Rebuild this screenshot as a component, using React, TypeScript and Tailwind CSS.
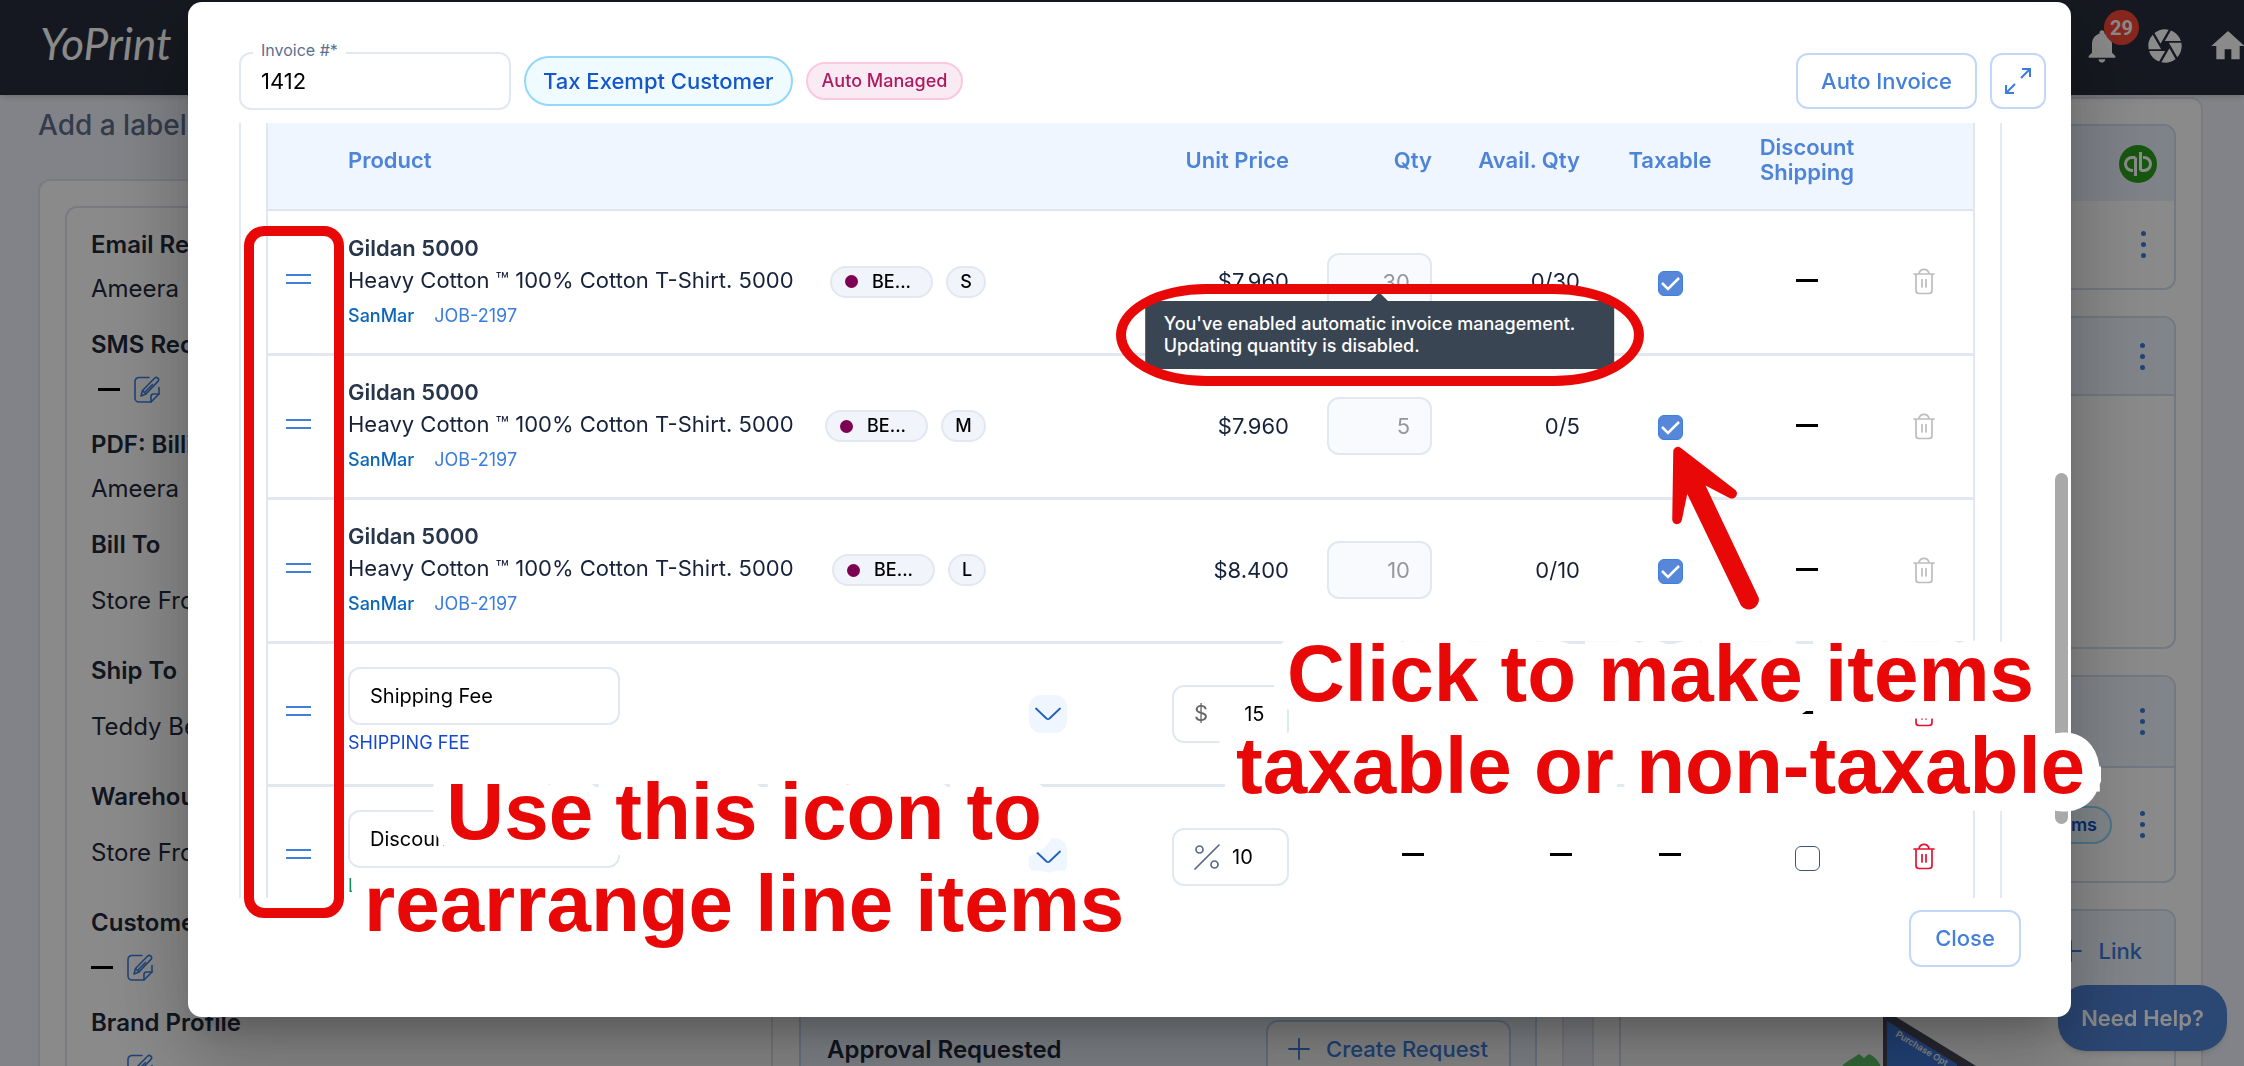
import type { ReactNode } from "react";
import { MdCamera, MdHome, MdNotifications } from "react-icons/md";

function EditIcon() {
  return (
    <svg className="h-[27px] w-[26px] text-[#3b7ddd]" viewBox="0 0 26 27" fill="none" stroke="currentColor" strokeWidth="1.6" strokeLinecap="round" strokeLinejoin="round">
      <path d="M15 1.5H5A4 4 0 0 0 1 5.500V22a4 4 0 0 0 4 4h12l8-8v-6.500" />
      <path d="M17 26v-5.500a2.500 2.500 0 0 1 2.500-2.500H25" />
      <path d="M7 20l1.500-5.500L20.500 2.200a2.300 2.300 0 0 1 3.400 3.200L12 18z" />
      <path d="M8.600 14.600L12 18M11.500 15.500l7-7" />
    </svg>
  );
}

function TrashIcon() {
  return (
    <svg className="h-[27px] w-[22px]" viewBox="0 0 22 27" fill="none" stroke="currentColor" strokeWidth="1.700" strokeLinecap="round" strokeLinejoin="round">
      <path d="M1 6h20M3 6v16.500a3 3 0 0 0 3 3h10a3 3 0 0 0 3-3V6M6 5.500C6.500 3 8.500 1.300 11 1.300S15.500 3 16 5.500M9 11.500v7.500M13 11.500v7.500" />
    </svg>
  );
}

function PercentIcon() {
  return (
    <svg className="h-[26px] w-[26px] shrink-0 text-[#56688a]" viewBox="0 0 26 26" fill="none" stroke="currentColor" strokeWidth="1.700" strokeLinecap="round">
      <path d="M25 1L1 25" />
      <circle cx="5.500" cy="5.500" r="3.500" />
      <circle cx="20.500" cy="20.500" r="3.500" />
    </svg>
  );
}

function PlusIcon() {
  return (
    <svg className="h-[22px] w-[22px]" viewBox="0 0 22 22" stroke="currentColor" strokeWidth="1.800" strokeLinecap="round">
      <path d="M11 1v20M1 11h20" />
    </svg>
  );
}

function Dots() {
  return (
    <button aria-label="More" className="flex flex-col gap-1.5 p-1">
      <span className="size-[5px] rounded-full bg-[#3b7ddd]" />
      <span className="size-[5px] rounded-full bg-[#3b7ddd]" />
      <span className="size-[5px] rounded-full bg-[#3b7ddd]" />
    </button>
  );
}

function Dash() {
  return <span className="inline-block h-[3px] w-[22px] bg-black" />;
}

function Field({ label, children, tall }: { label: string; children: ReactNode; tall?: boolean }) {
  return (
    <div className={tall ? "mb-3.5" : "mb-3"}>
      <h3 className="h-11 text-2xl leading-[44px] font-semibold text-[#1e293b]">{label}</h3>
      <div className={tall ? "flex h-[68px] items-center text-2xl text-[#1e293b]" : "flex h-11 items-center text-2xl text-[#1e293b]"}>{children}</div>
    </div>
  );
}

function Background() {
  return (
    <div className="flex h-screen flex-col overflow-hidden bg-[#f1f3fb]">
      <header className="z-10 flex h-[95px] shrink-0 items-start justify-between bg-[#282e3c] shadow-md">
        <span className="pt-2 pl-10 font-['Lato'] text-[44px] leading-[70px] text-white italic">YoPrint</span>
        <nav className="-mr-1 flex gap-[23px] pt-[26px] text-white">
          <button aria-label="Notifications" className="relative">
            <MdNotifications size={40} />
            <span className="absolute -top-4 left-[22px] flex size-[35px] items-center justify-center rounded-full bg-[#fb4836] font-['Roboto'] text-xl font-bold">29</span>
          </button>
          <button aria-label="Gallery"><MdCamera size={40} /></button>
          <button aria-label="Home"><MdHome size={40} /></button>
        </nav>
      </header>
      <div className="flex min-h-0 flex-1 gap-7 pr-[41px] pl-[38px]">
        <main className="flex min-w-0 flex-[1526_1_0%] flex-col">
          <h2 className="mt-3 h-[72px] shrink-0 text-[28px] leading-9 font-medium text-[#5d6f8c]">Add a label</h2>
          <div className="flex h-[1000px] gap-[26px] rounded-xl border-2 border-[#dfe3ee] bg-white p-[25px]">
            <section className="min-w-0 flex-[680_1_0%] rounded-xl border-2 border-[#dfe3ee] pt-[15px] pl-6">
              <Field label="Email Recipients">Ameera</Field>
              <Field label="SMS Recipients">
                <span className="mr-3.5 ml-[7px] flex"><Dash /></span>
                <EditIcon />
              </Field>
              <Field label="PDF: Billing">Ameera</Field>
              <Field label="Bill To" tall>Store Front</Field>
              <Field label="Ship To" tall>Teddy Bear</Field>
              <Field label="Warehouse" tall>Store Front</Field>
              <Field label="Customer">
                <span className="mr-3.5 flex"><Dash /></span>
                <EditIcon />
              </Field>
              <Field label="Brand Profile">
                <span className="mr-3.5 flex"><Dash /></span>
                <EditIcon />
              </Field>
            </section>
            <div className="flex min-w-0 flex-[738_1_0%] flex-col gap-[26px]">
              <section className="h-[778px] shrink-0 rounded-xl border-2 border-[#dfe3ee]" />
              <section className="flex h-[160px] shrink-0 items-start justify-between border-2 border-[#c6d9f5] bg-[#eff6ff] pt-2 pr-6 pl-[26px]">
                <h2 className="text-2xl leading-[60px] font-semibold text-[#1e293b]">Approval Requested</h2>
                <button className="flex h-[58px] w-[245px] items-center gap-4 rounded-xl border-2 border-[#bcd3f8] bg-white pl-[20px] text-[22px] font-medium text-[#3b7ddd]">
                  <PlusIcon />
                  Create Request
                </button>
              </section>
            </div>
          </div>
        </main>
        <aside className="mt-0.5 flex h-[1100px] min-w-0 flex-[557_1_0%] flex-col gap-[26px] rounded-xl border-2 border-[#dfe3ee] bg-white p-[25px]">
          <section className="h-[166px] shrink-0 overflow-hidden rounded-xl border-2 border-[#d3dfee]">
            <div className="flex h-[75px] items-center justify-end bg-[#eaf2fe] pr-[17px]">
              <svg className="size-[38px]" viewBox="0 0 38 38" fill="none">
                <circle cx="19" cy="19" r="19" fill="#2ca01c" />
                <path d="M16.500 12.500h-3.500a6.500 6.500 0 0 0 0 13h1M16.500 12.500v18.500M21.500 25.500h3.500a6.500 6.500 0 0 0 0-13h-1M21.500 25.500V7" stroke="#fff" strokeWidth="3" />
              </svg>
            </div>
            <div className="flex h-[87px] items-center justify-end pr-6"><Dots /></div>
          </section>
          <section className="h-[333px] shrink-0 overflow-hidden rounded-xl border-2 border-[#d3dfee]">
            <div className="flex h-[78px] items-center justify-end border-b-2 border-[#d3dfee] bg-[#eff6ff] pr-[25px]"><Dots /></div>
          </section>
          <section className="h-[208px] shrink-0 overflow-hidden rounded-xl border-2 border-[#d3dfee]">
            <div className="flex h-[91px] items-center justify-end border-b-2 border-[#d3dfee] bg-[#eff6ff] pr-[25px]"><Dots /></div>
            <div className="flex h-[113px] items-center justify-end gap-[24px] pr-[25px]">
              <span className="flex h-[38px] items-center rounded-full border-2 border-[#8bd8ff] bg-[#effbff] px-[13px] text-lg font-semibold text-[#0f4fc8]">Terms</span>
              <Dots />
            </div>
          </section>
          <section className="h-[300px] shrink-0 overflow-hidden rounded-xl border-2 border-[#d3dfee]">
            <div className="flex h-20 items-center justify-end gap-[16px] bg-[#eff6ff] pr-[32px] text-[22px] font-medium text-[#3b7ddd]">
              <PlusIcon />
              <a href="#link">Link</a>
            </div>
            <div className="flex items-start pt-1 pl-[220px]">
              <svg className="h-[90px] w-[140px]" viewBox="0 0 140 90" fill="none">
                <path d="M0 72c6-6 9-7 12-9l6-4 5 4 5-4c6 3 9 6 12 13v19H0z" fill="#5ec268" />
                <path d="M42 14l98 60v16H42z" fill="#48485c" />
                <path d="M46 26l70 43v21H46z" fill="#3f7be0" />
                <text x="54" y="41" transform="rotate(31 54 41)" fill="#fff" fontFamily="Inter" fontWeight="600" fontSize="9">Purchase Opt</text>
              </svg>
            </div>
          </section>
        </aside>
      </div>
      <button className="fixed right-[17px] bottom-[15px] h-[66px] rounded-[28px] bg-[#5083d7] px-[23px] text-[22px] font-semibold text-white shadow-md">Need Help?</button>
    </div>
  );
}

function Handle() {
  return (
    <button aria-label="Drag to reorder" className="mt-[-5px] ml-[18px] flex flex-col gap-1.5">
      <span className="h-0.5 w-[25px] bg-[#3f7fdc]" />
      <span className="h-0.5 w-[25px] bg-[#3f7fdc]" />
    </button>
  );
}

function Check({ label }: { label: string }) {
  return (
    <label className="relative inline-flex size-[25px] align-middle">
      <input type="checkbox" defaultChecked aria-label={label} className="peer size-[25px] appearance-none rounded-md border border-[#3f7fdc] bg-[#5787d9]" />
      <svg className="absolute inset-0 size-[25px]" viewBox="0 0 25 25" fill="none" stroke="#fff" strokeWidth="2.500">
        <path d="M4 12l6 6L21 7" />
      </svg>
    </label>
  );
}

type Product = { size: string; chip: string; price: string; qty: string; avail: string; tip?: boolean };

const products: Product[] = [
  { size: "S", chip: "w-10", price: "$7.960", qty: "30", avail: "0/30", tip: true },
  { size: "M", chip: "w-[45px]", price: "$7.960", qty: "5", avail: "0/5" },
  { size: "L", chip: "w-[38px]", price: "$8.400", qty: "10", avail: "0/10" },
];

function ProductRow({ size, chip, price, qty, avail, tip }: Product) {
  return (
    <tr className="h-36 border-b-[3px] border-[#e1e8f0]">
      <td><Handle /></td>
      <td className="pr-[148px]">
        <div className="flex items-center justify-between">
          <div className="text-[22px] leading-8 whitespace-nowrap">
            <p className="font-semibold text-[#27364b]">Gildan 5000</p>
            <p className="text-[#16213a]">Heavy Cotton ™ 100% Cotton T-Shirt. 5000</p>
            <p className="mt-1 flex gap-5 text-lg leading-8">
              <a href="#sanmar" className="font-medium text-[#0b66b8]">SanMar</a>
              <a href="#job" className="text-[#3b7ddd]">JOB-2197</a>
            </p>
          </div>
          <div className="flex gap-[13px] text-lg font-medium text-black">
            <span className="flex h-8 w-[103px] items-center gap-3.5 rounded-full border-2 border-[#e2e8f0] bg-[#f1f4fa] pl-[13px]">
              <span className="size-[13px] rounded-full bg-[#7d0052]" />
              BE...
            </span>
            <span className={`flex h-8 items-center justify-center rounded-full border-2 border-[#e2e8f0] bg-[#f1f4fa] ${chip}`}>{size}</span>
          </div>
        </div>
      </td>
      <td className="pr-5 text-right">{price}</td>
      <td className="pr-5">
        <div className="relative ml-auto w-[105px]">
          <input aria-label="Quantity" disabled defaultValue={qty} className="block h-[58px] w-full rounded-xl border-2 border-[#e2e8f0] bg-[#f8fafe] pr-5 text-right text-[#94979c]" />
          {tip && (
            <div role="tooltip" className="absolute top-[48px] left-1/2 z-10 -translate-x-1/2 rounded bg-[#3a4553] py-3 pr-[39px] pl-[19px] text-lg leading-[22px] font-medium whitespace-nowrap text-white">
              <span className="absolute -top-[6px] left-1/2 size-[13px] -translate-x-1/2 rotate-45 bg-[#3a4553]" />
              You've enabled automatic invoice management.
              <br />
              Updating quantity is disabled.
            </div>
          )}
        </div>
      </td>
      <td className="pr-5 text-right">{avail}</td>
      <td className="text-center"><Check label="Taxable" /></td>
      <td className="text-center"><div className="flex justify-center pb-0.5"><Dash /></div></td>
      <td><button disabled aria-label="Delete" className="mx-auto block text-[#bdbdbd]"><TrashIcon /></button></td>
    </tr>
  );
}

function FeeRow({ name, tag, tagClass, prefix, value, discount }: { name: string; tag: string; tagClass: string; prefix: ReactNode; value: string; discount?: boolean }) {
  return (
    <tr className="h-[143px] border-b-[3px] border-[#e1e8f0]">
      <td><Handle /></td>
      <td className="pr-[67px]">
        <div className="flex items-center justify-between">
          <div className="pb-px">
            <input aria-label="Item name" defaultValue={name} className="block h-[58px] w-[272px] rounded-xl border-2 border-[#e2e8f0] bg-white px-5 text-xl text-black" />
            <a href="#item" className={`block pt-0.5 text-lg leading-8 ${tagClass}`}>{tag}</a>
          </div>
          <button aria-label="Expand" className="flex h-[38px] w-[38px] items-center justify-center rounded-xl bg-[#eff6ff]">
            <svg className="w-[26px]" viewBox="0 0 26 14" fill="none" stroke="#1f5fb8" strokeWidth="1.800" strokeLinecap="round" strokeLinejoin="round">
              <path d="M1 1.500l10.500 10a2 2 0 0 0 3 0L25 1.500" />
            </svg>
          </button>
        </div>
      </td>
      <td className="pr-5">
        <label className="ml-auto flex h-[58px] w-[117px] items-center rounded-xl border-2 border-[#e2e8f0] bg-white pl-5">
          {prefix}
          <input aria-label={name} defaultValue={value} className="w-8 min-w-0 text-xl text-black" />
        </label>
      </td>
      <td className="pr-7">{discount && <div className="flex justify-end pb-1"><Dash /></div>}</td>
      <td className="pr-7">{discount && <div className="flex justify-end pb-1"><Dash /></div>}</td>
      <td>{discount && <div className="flex justify-center pb-1"><Dash /></div>}</td>
      <td className="text-center">
        {discount ? (
          <input type="checkbox" aria-label="Discount shipping" className="inline-block size-[25px] appearance-none rounded-md border border-[#3c5680] bg-white align-middle" />
        ) : (
          <div className="flex justify-center pb-0.5"><Dash /></div>
        )}
      </td>
      <td><button aria-label="Delete" className="mx-auto block text-[#e8112d]"><TrashIcon /></button></td>
    </tr>
  );
}

function Dialog() {
  return (
    <div role="dialog" aria-modal="true" className="relative mt-0.5 mr-[173px] mb-[49px] ml-[188px] flex min-w-0 flex-1 flex-col rounded-[14px] bg-white shadow-[0_22px_30px_-14px_rgba(0,0,0,0.2),0_48px_76px_6px_rgba(0,0,0,0.14),0_18px_92px_16px_rgba(0,0,0,0.12)]">
      <div className="flex h-[121px] shrink-0 items-center gap-[13px] pt-[37px] pr-[25px] pl-[51px]">
        <div className="relative">
          <label htmlFor="invoice" className="absolute -top-3 left-3.5 bg-white px-2 text-base leading-5 whitespace-nowrap text-[#5b6f90]">Invoice #*</label>
          <input id="invoice" defaultValue="1412" className="block h-[58px] w-[272px] rounded-xl border-2 border-[#e2e8f0] px-5 text-[22px] text-black" />
        </div>
        <span className="flex h-[50px] items-center rounded-full border-2 border-[#93d7fb] bg-[#effbff] px-[17px] text-[22px] font-medium text-[#1557c9]">Tax Exempt Customer</span>
        <span className="flex h-[38px] items-center rounded-full border-2 border-[#fbc8dd] bg-[#faeaf3] px-[14px] text-lg font-medium text-[#ad1a61]">Auto Managed</span>
        <button className="ml-auto h-14 w-[181px] rounded-xl border-2 border-[#c3d7f8] text-[22px] font-medium text-[#4480da]">Auto Invoice</button>
        <button aria-label="Expand dialog" className="flex size-14 items-center justify-center rounded-xl border-2 border-[#c3d7f8] text-[#3b7ddd]">
          <svg className="size-[26px]" viewBox="0 0 26 26" fill="none" stroke="currentColor" strokeWidth="2">
            <path d="M17 1h8v8M25 1l-9 9M9 25H1v-8M1 25l9-9" />
          </svg>
        </button>
      </div>
      <div className="mr-[69px] ml-[51px] h-[775px] shrink-0 overflow-hidden border-x-2 border-[#e4eaf2] px-[25px]">
        <div className="border-x-2 border-[#dfe7f1]">
          <table className="w-full table-fixed border-collapse text-[22px] text-[#16213a]">
            <colgroup>
              <col className="w-[80px]" />
              <col />
              <col className="w-[175px]" />
              <col className="w-[143px]" />
              <col className="w-[148px]" />
              <col className="w-[140px]" />
              <col className="w-[134px]" />
              <col className="w-[99px]" />
            </colgroup>
            <thead>
              <tr className="h-[87px] border-b-2 border-[#dce5f1] bg-[#f0f6ff] leading-[25px] text-[#4d84d8]">
                <th />
                <th className="pb-3 text-left font-semibold">Product</th>
                <th className="pr-5 pb-3 text-right font-semibold">Unit Price</th>
                <th className="pr-5 pb-3 text-right font-semibold">Qty</th>
                <th className="pr-5 pb-3 text-right font-semibold">Avail. Qty</th>
                <th className="pb-3 font-semibold">Taxable</th>
                <th className="pb-3 font-semibold">Discount Shipping</th>
                <th />
              </tr>
            </thead>
            <tbody>
              {products.map((p) => <ProductRow key={p.size} {...p} />)}
              <FeeRow name="Shipping Fee" tag="SHIPPING FEE" tagClass="text-[#1448cf]" prefix={<span className="mr-[36px] text-[22px] text-[#666]">$</span>} value="15" />
              <FeeRow name="Discount" tag="DISCOUNT" tagClass="text-[#0d9055]" prefix={<span className="mr-3 flex"><PercentIcon /></span>} value="10" discount />
            </tbody>
          </table>
        </div>
      </div>
      <div className="flex justify-end pt-3 pr-[50px]">
        <button className="h-[57px] w-28 rounded-xl border-2 border-[#c3d7f8] text-[22px] font-medium text-[#4480da]">Close</button>
      </div>
      <div className="absolute top-[471px] right-[3px] h-[351px] w-[13px] rounded-full bg-[#a9a9a9]" />
    </div>
  );
}

const note = "absolute text-center font-['Liberation_Sans'] text-[80px] leading-[92px] font-bold whitespace-nowrap text-[#e90808] [-webkit-text-stroke:35px_white] [paint-order:stroke_fill]";

function Annotations() {
  return (
    <div className="pointer-events-none absolute inset-0 overflow-hidden">
      <div className="absolute top-[226px] left-[244px] h-[692px] w-[100px] rounded-[20px] border-[10px] border-[#e90808]" />
      <div className="absolute top-[284px] left-[1116px] h-[102px] w-[528px] rounded-[90px/51px] border-[10px] border-[#e90808]" />
      <svg className="absolute top-[445px] left-[1670px] h-[168px] w-[92px]" viewBox="90 75 275 505" fill="#e90808">
        <path d="M99 96A14 14 0 0 1 121 83L283 208A15 15 0 0 1 268 234L196 197L356 534A30 30 0 0 1 303 558L141 222L125 300A14 14 0 0 1 96 297Z" />
      </svg>
      <p className={`top-[766px] left-[364px] ${note}`}>Use this icon to<br />rearrange line items</p>
      <p className={`top-[628px] left-[1236px] ${note}`}>Click to make items<br />taxable or non-taxable</p>
    </div>
  );
}

export default function App() {
  return (
    <div className="relative h-screen overflow-hidden font-['Inter',sans-serif]">
      <Background />
      <div className="absolute inset-0 z-20 flex bg-black/46">
        <Dialog />
      </div>
      <div className="absolute inset-0 z-30"><Annotations /></div>
    </div>
  );
}
